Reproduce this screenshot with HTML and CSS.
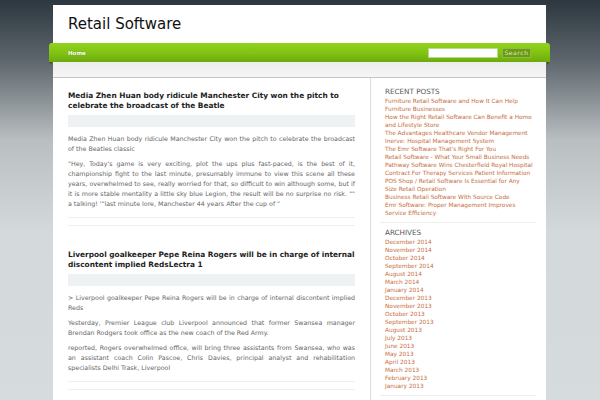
FILE: index.html
```html
<!DOCTYPE html>
<html>
<head>
<meta charset="utf-8">
<title>Retail Software</title>
<link rel="stylesheet" href="styles.css">
</head>
<body>
<div class="page">
  <header class="header">
    <h1 class="site-title">Retail Software</h1>
  </header>
  <nav class="nav">
    <a class="nav-link" href="#">Home</a>
    <form class="search">
      <input class="search-input" type="text">
      <button class="search-btn" type="button">Search</button>
    </form>
  </nav>
  <div class="strip"></div>
  <div class="columns">
    <main class="main">
      <article class="post">
        <h2 class="post-title">Media Zhen Huan body ridicule Manchester City won the pitch to celebrate the broadcast of the Beatle</h2>
        <div class="post-meta"></div>
        <div class="post-body">
          <p>Media Zhen Huan body ridicule Manchester City won the pitch to celebrate the broadcast of the Beatles classic</p>
          <p>"Hey, Today's game is very exciting, plot the ups plus fast-paced, is the best of it, championship fight to the last minute, presumably immune to view this scene all these years, overwhelmed to see, really worried for that, so difficult to win although some, but if it is more stable mentality a little sky blue Legion, the result will be no surprise no risk. "" a talking! '"last minute lore, Manchester 44 years After the cup of "</p>
        </div>
        <div class="post-foot"></div>
      </article>
      <article class="post">
        <h2 class="post-title">Liverpool goalkeeper Pepe Reina Rogers will be in charge of internal discontent implied RedsLectra 1</h2>
        <div class="post-meta"></div>
        <div class="post-body">
          <p>&gt; Liverpool goalkeeper Pepe Reina Rogers will be in charge of internal discontent implied Reds</p>
          <p>Yesterday, Premier League club Liverpool announced that former Swansea manager Brendan Rodgers took office as the new coach of the Red Army.</p>
          <p>reported, Rogers overwhelmed office, will bring three assistants from Swansea, who was an assistant coach Colin Pascoe, Chris Davies, principal analyst and rehabilitation specialists Delhi Trask, Liverpool</p>
        </div>
        <div class="post-foot"></div>
      </article>
    </main>
    <aside class="sidebar">
      <section class="widget">
        <h3 class="widget-title">Recent Posts</h3>
        <ul class="widget-list">
          <li><a href="#">Furniture Retail Software and How It Can Help<br>Furniture Businesses</a></li>
          <li><a href="#">How the Right Retail Software Can Benefit a Home<br>and Lifestyle Store</a></li>
          <li><a href="#">The Advantages Healthcare Vendor Management<br>Inerve: Hospital Management System</a></li>
          <li><a href="#">The Emr Software That's Right For You</a></li>
          <li><a href="#">Retail Software - What Your Small Business Needs</a></li>
          <li><a href="#">Pathway Software Wins Chesterfield Royal Hospital<br>Contract For Therapy Services Patient Information</a></li>
          <li><a href="#">POS Shop / Retail Software Is Essential for Any<br>Size Retail Operation</a></li>
          <li><a href="#">Business Retail Software With Source Code</a></li>
          <li><a href="#">Emr Software: Proper Management Improves<br>Service Efficiency</a></li>
        </ul>
      </section>
      <section class="widget">
        <h3 class="widget-title">Archives</h3>
        <ul class="widget-list">
          <li><a href="#">December 2014</a></li>
          <li><a href="#">November 2014</a></li>
          <li><a href="#">October 2014</a></li>
          <li><a href="#">September 2014</a></li>
          <li><a href="#">August 2014</a></li>
          <li><a href="#">March 2014</a></li>
          <li><a href="#">January 2014</a></li>
          <li><a href="#">December 2013</a></li>
          <li><a href="#">November 2013</a></li>
          <li><a href="#">October 2013</a></li>
          <li><a href="#">September 2013</a></li>
          <li><a href="#">August 2013</a></li>
          <li><a href="#">July 2013</a></li>
          <li><a href="#">June 2013</a></li>
          <li><a href="#">May 2013</a></li>
          <li><a href="#">April 2013</a></li>
          <li><a href="#">March 2013</a></li>
          <li><a href="#">February 2013</a></li>
          <li><a href="#">January 2013</a></li>
        </ul>
      </section>
    </aside>
  </div>
</div>
</body>
</html>
```
FILE: styles.css
```css
html, body {
  margin: 0;
  padding: 0;
}
body {
  font-family: "DejaVu Sans", Verdana, sans-serif;
  background: linear-gradient(#2d373f 0px, #5d666c 60px, #b9bec1 140px, #d3d8da 230px, #d6dbdd 400px);
  min-height: 400px;
  overflow: hidden;
}
.page {
  width: 493px;
  margin: 5px 0 0 53px;
  background: #fff;
  min-height: 420px;
}
.header {
  padding: 10px 0 10px 15px;
}
.site-title {
  margin: 0;
  font-size: 15px;
  line-height: 18px;
  font-weight: normal;
  color: #111;
}
.nav {
  position: relative;
  margin: 0 -4px;
  height: 19px;
  padding: 0 19px 0 19px;
  display: flex;
  align-items: center;
  justify-content: space-between;
  background: linear-gradient(#93d31f, #80c213 55%, #6caa0d);
  border-radius: 3px 3px 0 0;
}
.nav::before,
.nav::after {
  content: "";
  position: absolute;
  top: 19px;
  width: 0;
  height: 0;
  border-top: 3px solid #3f5e10;
}
.nav::before {
  left: 0;
  border-left: 3px solid transparent;
}
.nav::after {
  right: 0;
  border-right: 3px solid transparent;
}
.nav-link {
  color: #fff;
  font-size: 5.5px;
  font-weight: bold;
  text-decoration: none;
  text-shadow: 0 0 1px rgba(0,0,0,0.3);
}
.search {
  display: flex;
  align-items: center;
  gap: 4px;
  margin: 0;
}
.search-input {
  box-sizing: border-box;
  width: 70px;
  height: 10px;
  padding: 0;
  border: 1px solid #b8d98a;
  background: #fff;
}
.search-btn {
  box-sizing: border-box;
  width: 29px;
  height: 10px;
  padding: 0;
  border: 1px solid #8ebf3a;
  background: #6c9a16;
  color: #dce8c0;
  font-family: "DejaVu Sans", sans-serif;
  font-size: 6px;
  letter-spacing: 0.6px;
  line-height: 8px;
}
.strip {
  height: 15px;
  background: linear-gradient(#ececec, #f6f6f6);
  border-bottom: 1px solid #c4c6c7;
}
.columns {
  display: flex;
}
.main {
  flex: none;
  width: 287px;
  padding: 13px 15px 0 15px;
}
.post-title {
  margin: 0;
  font-size: 7.4px;
  line-height: 10px;
  font-weight: bold;
  color: #222;
}
.post-meta {
  margin-top: 4px;
  height: 12px;
  background: #eef2f3;
}
.post-body {
  margin-top: 7px;
}
.post-body p {
  margin: 0 0 5px 0;
  font-size: 6.3px;
  line-height: 10px;
  color: #666;
  text-align: justify;
}
.post-body p:last-child {
  margin-bottom: 0;
}
.post-foot {
  margin-top: 8px;
  height: 7px;
  border-top: 1px solid #efefef;
  border-bottom: 1px solid #efefef;
  margin-bottom: 24px;
}
.sidebar {
  flex: none;
  box-sizing: border-box;
  width: 176px;
  border-left: 1px solid #dedede;
  padding: 9px 10px 0 9px;
}
.widget {
  padding: 0 0 5px 5px;
  border-bottom: 1px solid #eeeeee;
  margin-bottom: 5px;
}
.widget-title {
  margin: 0;
  font-size: 7.2px;
  line-height: 9px;
  font-weight: normal;
  text-transform: uppercase;
  color: #555;
}
.widget-list {
  list-style: none;
  margin: 1px 0 0 0;
  padding: 0;
}
.widget-list li {
  font-size: 5.8px;
  line-height: 8px;
  white-space: nowrap;
}
.widget-list a {
  color: #c66d3e;
  text-decoration: none;
}
```
